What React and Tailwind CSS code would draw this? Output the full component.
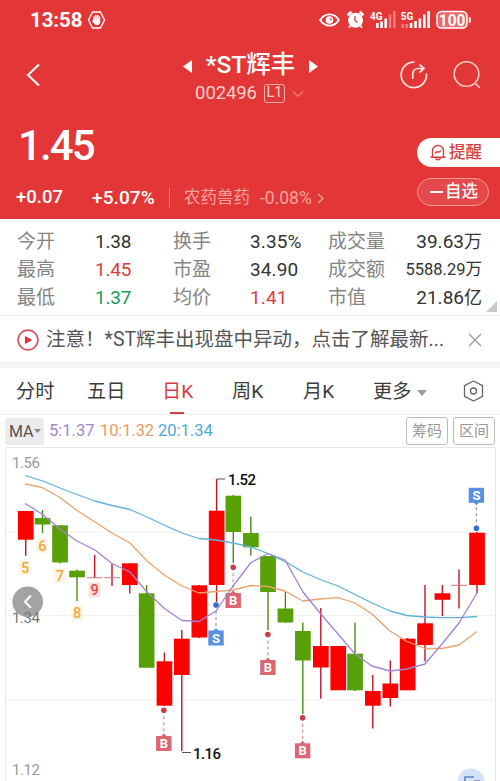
import clsx from "clsx";

const RED = "#fe0000";
const GREEN = "#58a008";

// x is the centre of the candle, top/bottom the body, high/low the wick
const candles = [
  { x: 25.7, top: 511, bottom: 539.7, high: 511, low: 555.7, up: true },
  { x: 42.5, top: 518, bottom: 524.5, high: 510, low: 533 },
  { x: 60, top: 525.3, bottom: 562.5, high: 525, low: 563.5 },
  { x: 77, top: 570.7, bottom: 577.3, high: 569.5, low: 601 },
  { x: 94.7, top: 577.2, bottom: 578.2, high: 555, low: 578, up: true },
  { x: 112, top: 577.2, bottom: 578.2, high: 564, low: 586, up: true },
  { x: 129.8, top: 563.3, bottom: 585, high: 563, low: 593.5, up: true },
  { x: 146.6, top: 593.3, bottom: 667.7, high: 585, low: 668 },
  { x: 164.4, top: 661.3, bottom: 705.7, high: 652.5, low: 706, up: true },
  { x: 181.8, top: 638.7, bottom: 675, high: 630, low: 751, up: true },
  { x: 199.3, top: 585.3, bottom: 637.5, high: 585, low: 638, up: true },
  { x: 216.6, top: 510.7, bottom: 585, high: 479, low: 602, up: true },
  { x: 233.3, top: 495.7, bottom: 532, high: 495, low: 563 },
  { x: 250.8, top: 533, bottom: 547.3, high: 516.5, low: 555.5 },
  { x: 268, top: 556, bottom: 592, high: 556, low: 630 },
  { x: 285.4, top: 608.5, bottom: 622.5, high: 592, low: 623 },
  { x: 302.8, top: 631, bottom: 660.5, high: 622.5, low: 714 },
  { x: 320.8, top: 646, bottom: 667.5, high: 608, low: 698.7, up: true },
  { x: 338.2, top: 646, bottom: 690.3, high: 646, low: 690, up: true },
  { x: 355, top: 653.7, bottom: 690.3, high: 622.5, low: 691 },
  { x: 372.8, top: 691, bottom: 705.7, high: 675, low: 728.5, up: true },
  { x: 390.3, top: 683.5, bottom: 698, high: 660.5, low: 706.5, up: true },
  { x: 407.6, top: 638.7, bottom: 690.3, high: 638, low: 690, up: true },
  { x: 425, top: 623.3, bottom: 645, high: 585, low: 661.5, up: true },
  { x: 442.4, top: 593.3, bottom: 599.8, high: 585, low: 616, up: true },
  { x: 459, top: 584.8, bottom: 585.8, high: 569.5, low: 608.5, up: true },
  { x: 477, top: 532.7, bottom: 585, high: 532, low: 593, up: true },
];

const lines = [
  {
    color: "#5db2dc",
    points:
      "25,475.5 43,481 60,488 77,494.5 95,501 112,505.5 130,509.5 147,517 165,525.5 182,533 199,538.5 216,540 233,543 251,547 268,553.5 286,562 303,572 320,579.5 338,586 355,594.5 372,603 390,611 407,615.5 425,617 442,617.7 459,617.7 477,616.5",
  },
  {
    color: "#e9a46e",
    points:
      "25,484 42,487.5 60,497.5 77,510.5 95,522 112,533 130,543 147,561 165,575.5 182,586 199,593 216,591.5 233,590 251,585.5 268,586.5 285,591 303,601 320,599 338,597.7 355,603 372,614 390,631 407,641.5 425,648.5 442,648.5 459,645 477,631.5",
  },
  {
    color: "#a282d3",
    points:
      "25,503.5 42,514 60,529 77,541 95,550 112,563.5 130,572 147,592 165,609 182,620.5 199,621.5 216,611 233,586 251,562.5 268,553.5 285,560 303,592 320,613 338,634 355,654 372,666 390,671 407,669 425,664 442,644 459,623 477,593",
  },
];

const markers = [
  { type: "B", x: 163.8, dot: 710.3, box: 743.5 },
  { type: "S", x: 216, dot: 605, box: 638 },
  { type: "B", x: 233.2, dot: 567.3, box: 600.5 },
  { type: "B", x: 267.9, dot: 634.5, box: 667.5 },
  { type: "B", x: 302.6, dot: 717.8, box: 750.8 },
  { type: "S", x: 476.4, dot: 528.3, box: 495.3 },
];

const counts = [
  { n: 5, x: 25, y: 573.5 },
  { n: 6, x: 42.3, y: 551 },
  { n: 7, x: 59.8, y: 581 },
  { n: 8, x: 77, y: 618.5 },
  { n: 9, x: 94.5, y: 595.5, hot: true },
];

const quotes = [
  ["今开", "1.38", "text-[#333]", "换手", "3.35%", "text-[#333]", "成交量", "39.63", "万"],
  ["最高", "1.45", "text-[#dc3a3a]", "市盈", "34.90", "text-[#333]", "成交额", "5588.29", "万"],
  ["最低", "1.37", "text-[#149d58]", "均价", "1.41", "text-[#dc3a3a]", "市值", "21.86", "亿"],
];

const Marker = ({ type, x, dot, box }) => {
  const below = box > dot;
  const color = type === "B" ? "#dc6671" : "#5a90e2";
  const edge = below ? box - 8 : box + 8;
  return (
    <g>
      <line
        x1={x}
        x2={x}
        y1={dot}
        y2={edge}
        stroke={type === "B" ? "#d68a91" : "#9b93b5"}
        strokeWidth="1.2"
        strokeDasharray="3 3"
      />
      <circle cx={x} cy={dot} r="2.8" fill={type === "B" ? "#cb3f49" : "#2f70cf"} />
      <path
        d={below ? `M${x - 3} ${edge + 1}l3 -3l3 3z` : `M${x - 3} ${edge - 1}l3 3l3 -3z`}
        fill={color}
      />
      <rect x={x - 7.7} y={box - 7.5} width="15.4" height="15" fill={color} />
      <text x={x} y={box + 4.6} textAnchor="middle" fontSize="13" fontWeight="700" fill="#fff">
        {type}
      </text>
    </g>
  );
};

const Signal = ({ label, bars, x }) => (
  <g>
    <text x={x} y="9.5" fontSize="10.5" fontWeight="700" fill="#fff" textLength="12.5" lengthAdjust="spacingAndGlyphs">
      {label}
    </text>
    {bars.map(([bx, h, opacity]) => (
      <rect key={bx} x={bx} y={18 - h} width="2.6" height={h} fill="#fff" opacity={opacity} />
    ))}
  </g>
);

const StatusBar = () => (
  <div className="flex h-10 items-center pl-[30px] pr-[28px]">
    <span className="text-[20.5px] font-bold leading-none tracking-[-0.1px]">13:58</span>
    <svg className="ml-[5px]" width="19" height="18" viewBox="0 0 19 18">
      <path d="M5.5 1h8l4 8-4 8h-8l-4-8z" fill="none" stroke="#fff" strokeWidth="1.4" strokeLinejoin="round" />
      <path d="M6.8 6v4M8.7 4.6v5M10.6 4.6v5M12.4 6v4" stroke="#fff" strokeWidth="1.6" strokeLinecap="round" />
      <path d="M6.1 8.5h7V11c0 2-1.3 3-3 3-1.5 0-2.5-.6-3.2-1.8L5 10z" fill="#fff" />
    </svg>
    <svg className="ml-auto" width="153" height="20" viewBox="0 0 153 20">
      <path d="M1.2 10c4.500-7.500 14.500-7.500 18.500 0-4 7.500-14 7.500-18.500 0z" fill="none" stroke="#fff" strokeWidth="1.9" />
      <circle cx="10.5" cy="10" r="3.8" fill="#fff" />
      <circle cx="11.8" cy="9.2" r="1" fill="#e33737" />
      <circle cx="36.5" cy="10.2" r="7.5" fill="#fff" />
      <path d="M28.8 5.500a9 9 0 0 1 3.700-3.500M40.500 2a9 9 0 0 1 3.700 3.500" stroke="#fff" strokeWidth="2.6" />
      <path d="M31.500 15.500l-1.500 2.200M41.500 15.500l1.500 2.200" stroke="#fff" strokeWidth="1.8" />
      <path d="M36 6v4.500l2.500 2" fill="none" stroke="#e33737" strokeWidth="1.3" />
      <Signal
        label="4G"
        x="51"
        bars={[[57, 5, 1], [61.2, 6.5, 1], [65.4, 9.5, 1], [69.7, 13.5, 0.35], [74, 17, 0.35]]}
      />
      <Signal
        label="5G"
        x="81.8"
        bars={[[82.5, 4, 0.35], [86.5, 4, 0.35], [90.8, 5, 1], [95.2, 7, 1], [99.6, 9.5, 1], [104, 13.5, 1], [108.3, 17, 1]]}
      />
      <rect x="118" y="1.5" width="30" height="16.5" rx="4.5" fill="#fff" fillOpacity=".25" stroke="#fff" strokeWidth="1.5" />
      <text x="119.8" y="15.6" fontSize="16.5" fontWeight="700" fill="#fff" textLength="26.5" lengthAdjust="spacingAndGlyphs">
        100
      </text>
      <rect x="149.8" y="7" width="2" height="6" rx="1" fill="#fff" />
    </svg>
  </div>
);

const Header = () => (
  <header className="h-[219px] bg-[#e33737] text-white">
    <StatusBar />
    <div className="flex h-[70px] items-center justify-between pl-[26px] pr-[19px]">
      <svg width="14" height="24" viewBox="0 0 14 24" fill="none" stroke="#fff" strokeWidth="2">
        <path d="M13 1.5L2 12l11 10.500" />
      </svg>
      <div className="ml-[61px] flex flex-col items-center pt-[7px]">
        <div className="flex h-[30px] items-center leading-none">
          <svg width="9" height="13" viewBox="0 0 9 13" fill="#fff">
            <path d="M9 0v13L0 6.5z" />
          </svg>
          <span className="-mt-0.5 ml-[14px] mr-[14px] whitespace-nowrap text-[24.5px] font-medium">*ST辉丰</span>
          <svg width="9" height="13" viewBox="0 0 9 13" fill="#fff">
            <path d="M0 0v13l9-6.500z" />
          </svg>
        </div>
        <div className="mr-[2px] flex h-[24px] items-center text-[#fbd0cd]">
          <span className="text-[18.5px] leading-none tracking-[-0.1px]">002496</span>
          <span className="ml-[7px] flex h-[19px] w-[21px] items-center justify-center rounded-[3px] border border-[#f3b0ae] text-[14.5px] leading-none">
            L1
          </span>
          <svg className="ml-[7px]" width="12" height="8" viewBox="0 0 12 8" fill="none" stroke="#f6b3b0">
            <path d="M1 1.5l5 5 5-5" />
          </svg>
        </div>
      </div>
      <div className="flex items-center gap-[25px]">
        <svg width="28" height="28" viewBox="0 0 28 28" fill="none" stroke="#fde4e2" strokeWidth="1.7">
          <path d="M14.500 1.200A12.700 12.700 0 1 0 26.500 12.500" />
          <path d="M12.700 18v-4.500c0-4 2-6 6-6h4.500M19.500 3.500l4.500 4-4.500 4" />
        </svg>
        <svg width="28" height="28" viewBox="0 0 28 28" fill="none" stroke="#fbcfcd" strokeWidth="1.6">
          <circle cx="13.5" cy="13" r="12.3" />
          <path d="M22 22l5 5" />
        </svg>
      </div>
    </div>
    <div className="flex h-[109px] justify-between">
      <div className="pl-[18px]">
        <div className="mt-[16px] h-[40px] text-[42px] font-medium leading-[40px] tracking-[-1.9px]">1.45</div>
        <div className="mt-[18px] flex h-[24px] items-center pt-1">
          <span className="-ml-[2px] w-[76px] text-[18.5px] font-medium">+0.07</span>
          <span className="w-[77px] text-[19px] font-medium tracking-[0.1px]">+5.07%</span>
          <span className="h-[20px] w-px bg-[#ee8583]" />
          <span className="ml-[14px] text-[16.5px] leading-none text-[#f3a4a1]">农药兽药</span>
          <span className="ml-[10px] text-[17.5px] text-[#f3a4a1]">-0.08%</span>
          <svg className="ml-[5px]" width="7" height="11" viewBox="0 0 7 11" fill="none" stroke="#f3a4a1" strokeWidth="1.2">
            <path d="M1 1l5 4.500L1 10" />
          </svg>
        </div>
      </div>
      <div className="flex w-[83px] flex-col gap-[11px] pt-[28px]">
        <div className="flex h-[29px] items-center rounded-l-full bg-white pl-[13px] text-[#d63f3f]">
          <svg width="16" height="17" viewBox="0 0 16 17" fill="none" stroke="#d63f3f" strokeWidth="1.4">
            <path d="M2.500 13V7a5.500 5.500 0 0 1 11 0v6M0.500 13.200h15M5.500 13.500c.5 3 4.500 3 5 0M5 9.500l2-2 1.500 1L11 6.500" />
          </svg>
          <span className="ml-[3px] pt-px text-[16.5px] font-medium">提醒</span>
        </div>
        <div className="flex h-[28px] w-[72px] items-center rounded-full border border-[#f19a98] bg-[#e5494a] pl-[12px]">
          <span className="h-[1.5px] w-[13px] bg-white" />
          <span className="ml-[2px] pt-px text-[16.5px] font-medium">自选</span>
        </div>
      </div>
    </div>
  </header>
);

const Quotes = () => (
  <section className="relative h-[97px] border-b border-[#eeeeee] pt-[9px] text-[19px]">
    {quotes.map(([a, av, ac, b, bv, bc, c, cv, unit]) => (
      <div key={a} className="flex h-[28px] items-center pl-[17px] pr-[18px] leading-[28px] text-[#858585]">
        <span className="w-[78px]">{a}</span>
        <span className={clsx("w-[78px] tracking-[-0.2px]", ac)}>{av}</span>
        <span className="w-[77px]">{b}</span>
        <span className={clsx("w-[78px] tracking-[0.1px]", bc)}>{bv}</span>
        <span>{c}</span>
        <span className="ml-auto flex items-center whitespace-nowrap text-[#333]">
          <span className={cv.length > 6 ? "text-[16.5px]" : "text-[19px]"}>{cv}</span>
          <span className={cv.length > 6 ? "text-[16.5px]" : "text-[18px]"}>{unit}</span>
        </span>
      </div>
    ))}
    <svg className="absolute right-[3px] bottom-[3px]" width="11" height="11" viewBox="0 0 11 11">
      <path d="M11 0v11H0z" fill="#c9c9c9" />
    </svg>
  </section>
);

const Notice = () => (
  <section className="flex h-[45px] items-center pl-[17px] pr-[18px]">
    <svg className="mt-[2px]" width="22" height="22" viewBox="0 0 22 22">
      <circle cx="11" cy="11" r="9.9" fill="none" stroke="#d85560" strokeWidth="1.7" />
      <path d="M8 7l7.500 4L8 15z" fill="#df2f3c" />
    </svg>
    <span className="ml-[7px] whitespace-nowrap pt-[3px] text-[19.5px] text-[#555]">
      注意！*ST辉丰出现盘中异动，点击了解最新...
    </span>
    <svg className="ml-auto mt-[2px]" width="14" height="14" viewBox="0 0 14 14" stroke="#999" strokeWidth="1.2">
      <path d="M1 1l12 12M13 1L1 13" />
    </svg>
  </section>
);

const Tabs = () => (
  <nav className="flex h-[47px] items-center border-b border-[#eeeeee] pl-[16px] pt-[3px] text-[19.2px] text-[#3c3c3c]">
    <span className="w-[71px]">分时</span>
    <span className="w-[75px]">五日</span>
    <span className="relative flex h-full w-[70px] items-center text-[#dc3b42]">
      日K
      <span className="absolute bottom-0 left-[8px] h-[2px] w-[14px] bg-[#d43d42]" />
    </span>
    <span className="w-[71px]">周K</span>
    <span className="w-[70px]">月K</span>
    <span>更多</span>
    <svg className="ml-[6px]" width="10" height="6" viewBox="0 0 10 6">
      <path d="M0 0h10L5 6z" fill="#999" />
    </svg>
    <svg className="-mt-[3px] ml-auto mr-[16px]" width="21" height="22" viewBox="0 0 21 22" fill="none" stroke="#666" strokeWidth="1.3">
      <path d="M10.500 1l9 4.700v10.600l-9 4.700-9-4.700V5.700z" strokeLinejoin="round" />
      <circle cx="10.5" cy="11" r="3" />
    </svg>
  </nav>
);

const Indicators = () => (
  <div className="flex h-[32px] items-center px-[5px] text-[16.5px] leading-none">
    <span className="flex h-[27px] w-[39px] items-center rounded-[3px] bg-[#ececec] pl-[4px] text-[#555]">
      <span className="pt-px text-[16px]">MA</span>
      <svg width="7" height="4" viewBox="0 0 7 4">
        <path d="M0 0h7L3.500 4z" fill="#888" />
      </svg>
    </span>
    <span className="ml-[5px] w-[51px] pt-px text-[#a287cf]">5:1.37</span>
    <span className="w-[58px] pt-px tracking-[-0.1px] text-[#e59c62]">10:1.32</span>
    <span className="pt-px text-[#4fa9d6]">20:1.34</span>
    <span className="ml-auto flex h-[28px] w-[42px] items-center justify-center rounded-[3px] border border-[#bbb] text-[15px] text-[#999]">
      筹码
    </span>
    <span className="ml-[5px] flex h-[28px] w-[42px] items-center justify-center rounded-[3px] border border-[#bbb] text-[15px] text-[#999]">
      区间
    </span>
  </div>
);

const Chart = () => (
  <svg className="block" width="500" height="334" viewBox="0 447 500 334">
    <path d="M5.500 781V447.500h490V781" fill="none" stroke="#e6e6e6" />
    {[532, 615.5, 700].map((y) => (
      <line key={y} x1="6" x2="495" y1={y} y2={y} stroke="#f2f2f2" />
    ))}

    {candles.map((c) => (
      <g key={c.x}>
        <line x1={c.x} x2={c.x} y1={c.high} y2={c.low} stroke={c.up ? "#c01622" : "#4c8a18"} strokeWidth="1.4" />
        <rect
          x={c.x - 7.8}
          y={c.top}
          width="15.7"
          height={c.bottom - c.top}
          fill={c.bottom - c.top > 2 ? (c.up ? RED : GREEN) : "#d87278"}
        />
      </g>
    ))}

    {counts.map(({ n, x, y, hot }) => (
      <g key={n}>
        <rect x={x - 6} y={y - 13} width="12" height="15" rx="2" fill={hot ? "#fde0e0" : "#fff5e6"} />
        <text x={x} y={y - 0.3} textAnchor="middle" fontSize="14.5" fontWeight="500" fill={hot ? "#e04a4a" : "#f0a83c"}>
          {n}
        </text>
      </g>
    ))}

    {markers.map((m) => (
      <Marker key={m.x} {...m} />
    ))}

    {lines.map((l) => (
      <polyline key={l.color} points={l.points} fill="none" stroke={l.color} strokeWidth="1.3" strokeLinejoin="round" />
    ))}

    {/* High and low of the visible range */}
    <path d="M217 479h8M182 752.500h9" stroke="#555" fill="none" />
    <text x="228" y="485" fontSize="15" fontWeight="500" fill="#111" textLength="28">1.52</text>
    <text x="193" y="759" fontSize="15" fontWeight="500" fill="#111" textLength="28">1.16</text>

    <circle cx="27.7" cy="601.7" r="15.3" fill="#a3a3a3" />
    <g fontSize="15" fill="#999">
      <text x="12" y="467.5" textLength="28">1.56</text>
      <text x="12" y="623" textLength="28" fill="#777">1.34</text>
      <text x="12" y="775" textLength="28">1.12</text>
    </g>
    <path d="M31 595.500l-6 6.200 6 6.200" fill="none" stroke="#fff" strokeWidth="2" />

    <circle cx="471" cy="782.5" r="14" fill="#d5e3f7" />
    <path d="M465 784v-7h9M474 781h6" fill="none" stroke="#5e88c6" strokeWidth="1.7" />
  </svg>
);

export default function App() {
  return (
    <div className="h-[781px] w-[500px] overflow-hidden bg-white font-[Roboto,'Noto_Sans_CJK_SC',sans-serif]">
      <Header />
      <Quotes />
      <Notice />
      <div className="h-[7px] bg-[#f6f6f6]" />
      <Tabs />
      <Indicators />
      <Chart />
    </div>
  );
}
